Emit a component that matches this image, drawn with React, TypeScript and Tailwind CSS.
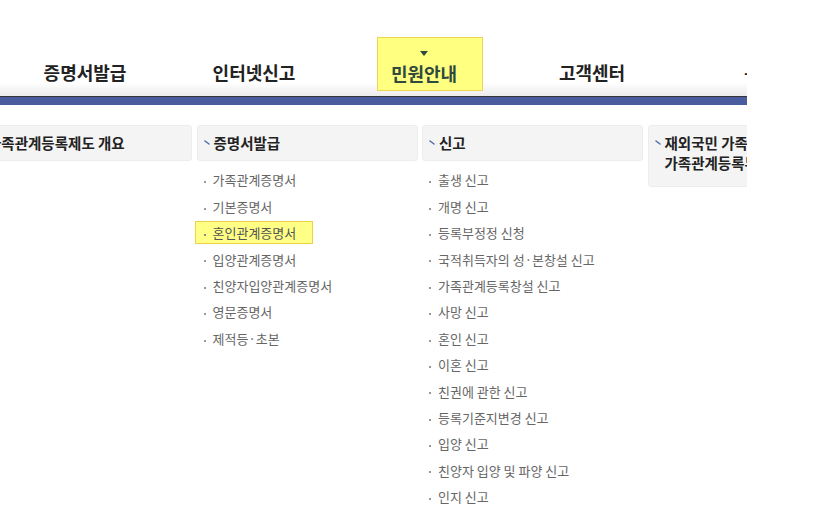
import React from "react";

const NAV = [
    { label: "증명서발급", width: "w-[170px]" },
    { label: "인터넷신고", width: "w-[168px]" },
    { label: "민원안내", width: "w-[184px]", active: true },
    { label: "고객센터", width: "w-[140px]" },
];

interface Column {
    title: React.ReactNode;
    headerClass?: string;
    items: string[];
    highlight?: number;
}

const COLUMNS: Column[] = [
    { title: "가족관계등록제도 개요", items: [] },
    {
        title: "증명서발급",
        items: ["가족관계증명서", "기본증명서", "혼인관계증명서", "입양관계증명서", "친양자입양관계증명서", "영문증명서", "제적등·초본"],
        highlight: 2,
    },
    {
        title: "신고",
        items: [
            "출생 신고", "개명 신고", "등록부정정 신청", "국적취득자의 성·본창설 신고", "가족관계등록창설 신고",
            "사망 신고", "혼인 신고", "이혼 신고", "친권에 관한 신고", "등록기준지변경 신고",
            "입양 신고", "친양자 입양 및 파양 신고", "인지 신고",
        ],
    },
    {
        title: (<>재외국민 가족관계<br />가족관계등록부</>),
        headerClass: "pb-[13px]",
        items: [],
    },
];

function Marker() {
    return (
        <svg width="6" height="5" viewBox="0 0 6 5" className="shrink-0 mt-[7px]">
            <path d="M1 1 L5 4" stroke="#4d6aa8" strokeWidth="1.4" strokeLinecap="round" />
        </svg>
    );
}

function ListItem({ text, active }: { text: string; active?: boolean }) {
    if (active) {
        return (
            <li className="h-[26.4px] flex items-center">
                <div className="ml-[-2px] w-[118px] h-[23px] flex items-center pl-[8px] bg-[#ffff85] border border-[#ecd244]">
                    <span className="w-[2px] h-[2px] bg-[#888] mt-[4px] shrink-0" />
                    <span className="ml-[7px] text-[#555]">{text}</span>
                </div>
            </li>
        );
    }
    return (
        <li className="h-[26.4px] flex items-center pl-[7px]">
            <span className="w-[2px] h-[2px] bg-[#999] mt-[4px] shrink-0" />
            <span className="ml-[7px]">{text}</span>
        </li>
    );
}

export default function App() {
    return (
        <div className="w-[820px] h-[525px] bg-white font-['Noto_Sans_CJK_KR','Noto_Sans',sans-serif]">
            <div className="w-[747px] h-full overflow-hidden">
                {/* top nav */}
                <div className="h-[97px] border-b border-[#333] bg-[linear-gradient(to_bottom,#ffffff_86%,#ebebeb)] flex">
                    {NAV.map((n) => (
                        <div key={n.label} className={`${n.width} shrink-0 flex justify-center`}>
                            <div
                                className={`mt-[37px] h-[54px] flex flex-col items-center pt-[13px] ${
                                    n.active ? "w-[106px] pr-[12px] bg-[#ffff80] border border-[#ecd35a]" : ""
                                }`}
                            >
                                <span
                                    className={`w-0 h-0 border-l-[4px] border-r-[4px] border-t-[5px] border-l-transparent border-r-transparent ${
                                        n.active ? "border-t-[#2e4a3c]" : "border-t-transparent"
                                    }`}
                                />
                                <span
                                    className={`mt-[5px] leading-[24px] text-[18px] font-bold whitespace-nowrap ${
                                        n.active ? "text-[#2f4a3e]" : "text-[#222]"
                                    }`}
                                >
                                    {n.label}
                                </span>
                            </div>
                        </div>
                    ))}
                    <div className="shrink-0 pl-[82px] pt-[60px] leading-[24px] text-[17px] font-bold text-[#222]">-</div>
                </div>
                <div className="h-[8px] bg-[#4a5c9e]" />

                {/* submenu columns */}
                <div className="ml-[-29px] mt-[20px] flex gap-[4.5px] items-start">
                    {COLUMNS.map((c, i) => (
                        <div key={i} className="w-[221px] shrink-0">
                            <div
                                className={`bg-[#f4f4f4] border border-[#ededed] rounded-[3px] pl-[6px] pt-[7px] ${
                                    c.headerClass ?? "pb-[7px]"
                                } flex gap-[4px]`}
                            >
                                <Marker />
                                <div className="text-[14.5px] leading-[20px] font-bold text-[#222] whitespace-nowrap">
                                    {c.title}
                                </div>
                            </div>
                            {c.items.length > 0 && (
                                <ul className="mt-[6px] text-[13px] text-[#666] whitespace-nowrap">
                                    {c.items.map((it, j) => (
                                        <ListItem key={it} text={it} active={c.highlight === j} />
                                    ))}
                                </ul>
                            )}
                        </div>
                    ))}
                </div>
            </div>
        </div>
    );
}
